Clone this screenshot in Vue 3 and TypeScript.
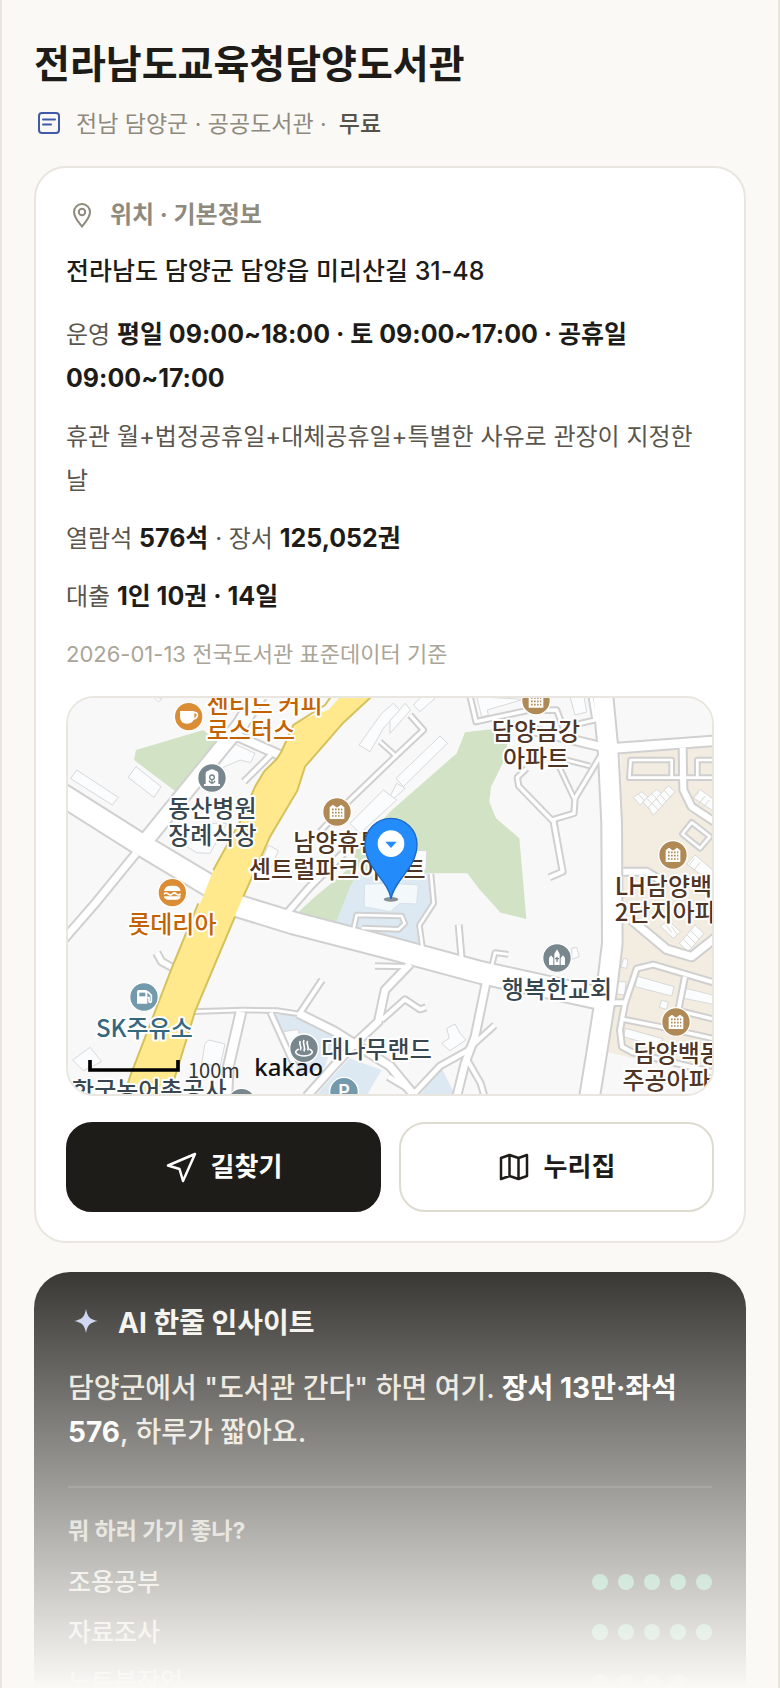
<script setup lang="ts">
interface Road { d: string; w: number }
interface Label { x: number; y: number; tone: string; anchor: 'start' | 'middle'; lines: string[] }
interface Poi { x: number; y: number; tone: string; icon: string }
interface Rating { name: string; score: number }

const roads: Road[] = [
  { d: 'M0 310 L240 462 L470 600 L540 650 L700 699 L990 774 L1265 848 L1640 930', w: 62 },
  { d: 'M255 455 L430 240 L540 105 L600 10', w: 42 },
  { d: 'M525 135 L670 200', w: 24 },
  { d: 'M632 195 L552 275', w: 12 },
  { d: 'M228 490 L110 635 L10 750', w: 20 },
  { d: 'M290 788 L305 815 L350 840', w: 16 },
  { d: 'M400 965 L550 960 L650 962 L720 972', w: 8 },
  { d: 'M715 970 L820 1022 L990 1128 L1070 1225', w: 22 },
  { d: 'M786 870 L718 972', w: 12 },
  { d: 'M543 965 L505 1130 L500 1225', w: 26 },
  { d: 'M632 968 L705 1130', w: 12 },
  { d: 'M685 665 L750 590 L850 490', w: 16 },
  { d: 'M1050 822 L975 900 L955 995 L880 1065 L820 1130 L740 1220', w: 20 },
  { d: 'M945 828 L1050 830', w: 10 },
  { d: 'M1280 870 L1245 1040 L1215 1120 L1190 1220', w: 20 },
  { d: 'M1304 1006 L1222 1080', w: 12 },
  { d: 'M1222 1082 L1140 1128 L1065 1208 L985 1160', w: 14 },
  { d: 'M1222 1110 L1262 1180 L1275 1225', w: 12 },
  { d: 'M1196 704 L1206 820', w: 12 },
  { d: 'M1345 793 L1305 788 L1290 850', w: 8 },
  { d: 'M1098 952 L1080 958 L1035 928 L965 990', w: 12 },
  { d: 'M1113 552 L1121 640 L1078 706 L1090 790', w: 8 },
  { d: 'M880 720 L890 675 L1025 678 L1034 700 L1016 718 L905 714', w: 8 },
  { d: 'M1628 10 L1644 175 L1655 400 L1657 760 L1640 900 L1610 1090 L1588 1225', w: 56 },
  { d: 'M1650 176 L1970 152', w: 26 },
  { d: 'M1655 178 L1500 140 L1380 112', w: 22 },
  { d: 'M1228 10 L1248 95 L1400 62 L1490 60 L1520 140', w: 10 },
  { d: 'M1592 10 L1605 90 L1540 105', w: 10 },
  { d: 'M1400 235 L1372 262 L1376 288 L1475 390 L1542 370 L1545 325 L1620 200', w: 10 },
  { d: 'M1480 390 L1508 545 L1468 562', w: 12 },
  { d: 'M1495 225 L1542 325', w: 8 },
  { d: 'M1500 205 L1590 228', w: 8 },
  { d: 'M1050 75 L1090 120 L1000 205 L870 330 L780 425', w: 10 },
  { d: 'M960 155 L1010 200', w: 8 },
  { d: 'M1868 172 L1870 300 L1895 350 L1970 400', w: 18 },
  { d: 'M1712 210 H1835 V263 H1708 Z', w: 8 },
  { d: 'M1835 263 H1970', w: 8 },
  { d: 'M1912 263 V210 H1970', w: 8 },
  { d: 'M1895 397 L1950 440 L1920 475 L1867 432 Z', w: 8 },
  { d: 'M1690 545 L1760 545 L1800 570', w: 18 },
  { d: 'M1715 690 L1820 778 L1895 800 L1970 740', w: 22 },
  { d: 'M1970 880 L1780 824 L1730 836 L1695 940 L1680 1020 L1686 1070 L1720 1088 L1970 1150', w: 12 },
  { d: 'M1875 860 L1855 960', w: 12 },
  { d: 'M1690 988 L1790 1008 L1970 1048', w: 10 },
  { d: 'M1850 960 L1970 990', w: 10 },
  { d: 'M1655 938 L1695 938', w: 14 },
]

const buildings: string[] = [
  '50,240 175,322 157,345 32,266', '228,230 303,290 282,322 204,262', '520,160 585,190 572,218 540,210 490,232 455,300 438,285',
  '965,70 1000,40 1020,60 970,115 930,185 897,165', '1140,138 1162,160 1030,290 1008,265', '990,320 1010,280 1036,295 990,335',
  '1060,45 1095,10 1125,25 1080,65', '1010,70 1035,40 1052,60 990,130 990,92', '1250,20 1265,80 1285,76 1282,60 1390,28', '1530,20 1545,75 1580,66 1572,20',
  '365,460 440,400 500,400 450,490 410,488', '625,465 655,482 635,530 605,510', '990,480 1100,482 1098,540 990,545',
  '38,1110 90,1072 125,1115 70,1142', '447,1050 495,1062 480,1130 425,1120 435,1060', '280,20 295,36 306,26',
  '1160,1015 1185,1002 1200,1030 1218,1050 1170,1082 1145,1060 1168,1045', '1535,775 1550,772 1558,800 1535,808',
  '670,1025 715,1018 720,1050 690,1080', '870,400 970,300 1010,330 900,430',
  '1730,858 1842,890 1835,918 1726,890', '1878,895 1970,918 1970,945 1872,925', '1697,1015 1808,1046 1800,1072 1690,1040',
  '1805,930 1825,936 1820,958 1798,952', '1690,805 1704,808 1700,835 1684,832', '1672,875 1698,875 1694,915 1668,912',
  '1720,322 1745,305 1765,322 1740,345', '1748,335 1790,298 1808,315 1765,355', '1765,352 1825,287 1845,305 1780,376',
  '1898,322 1920,298 1970,335 1970,370', '1880,522 1905,495 1970,550 1970,590', '1800,708 1825,692 1862,725 1840,745', '1858,760 1905,705 1932,730 1885,785',
]

const labels: Label[] = [
  { x: 440, y: 68, tone: 'food', anchor: 'start', lines: ['센티드 커피', '로스터스'] },
  { x: 457, y: 382, tone: 'slate', anchor: 'middle', lines: ['동산병원', '장례식장'] },
  { x: 832, y: 484, tone: 'home', anchor: 'middle', lines: ['남양휴튼', '센트럴파크아파트'] },
  { x: 1428, y: 150, tone: 'home', anchor: 'middle', lines: ['담양금강', '아파트'] },
  { x: 1664, y: 614, tone: 'home', anchor: 'start', lines: ['LH담양백', '2단지아파트'] },
  { x: 337, y: 728, tone: 'food', anchor: 'middle', lines: ['롯데리아'] },
  { x: 253, y: 1040, tone: 'fuel', anchor: 'middle', lines: ['SK주유소'] },
  { x: 784, y: 1104, tone: 'slate', anchor: 'start', lines: ['대나무랜드'] },
  { x: 1491, y: 924, tone: 'slate', anchor: 'middle', lines: ['행복한교회'] },
  { x: 1853, y: 1116, tone: 'home', anchor: 'middle', lines: ['담양백동', '주공아파트'] },
  { x: 268, y: 1226, tone: 'slate', anchor: 'middle', lines: ['한국농어촌공사'] },
]

const pois: Poi[] = [
  { x: 386, y: 80, tone: 'food', icon: 'cup' },
  { x: 456, y: 264, tone: 'slate', icon: 'memorial' },
  { x: 831, y: 366, tone: 'home', icon: 'flats' },
  { x: 1428, y: 32, tone: 'home', icon: 'flats' },
  { x: 1839, y: 495, tone: 'home', icon: 'flats' },
  { x: 337, y: 608, tone: 'food', icon: 'burger' },
  { x: 252, y: 921, tone: 'fuel', icon: 'fuel' },
  { x: 732, y: 1075, tone: 'slate', icon: 'spa' },
  { x: 1491, y: 804, tone: 'slate', icon: 'church' },
  { x: 1848, y: 996, tone: 'home', icon: 'flats' },
  { x: 852, y: 1205, tone: 'fuel', icon: 'parking' },
  { x: 545, y: 1238, tone: 'slate', icon: 'none' },
]

const ratings: Rating[] = [
  { name: '조용공부', score: 5 },
  { name: '자료조사', score: 5 },
  { name: '노트북작업', score: 4 },
]
</script>

<template>
  <main class="page">
    <header class="head">
      <h1>전라남도교육청담양도서관</h1>
      <p class="meta">
        <svg class="meta-icon" viewBox="0 0 30 30" aria-hidden="true">
          <rect x="5" y="4" width="20" height="20" rx="3" />
          <path d="M9 10.500h12M9 15.500h8" />
        </svg>
        <span>전남 담양군 · 공공도서관 ·</span>
        <strong>무료</strong>
      </p>
    </header>

    <section class="card">
      <h2 class="label">
        <svg class="pin-icon" viewBox="0 0 32 32" aria-hidden="true">
          <path d="M16 27.500C12.500 23 8 18.500 8 13a8 8 0 0 1 16 0c0 5.500-4.500 10-8 14.500Z" />
          <circle cx="16" cy="13" r="3.200" />
        </svg>
        위치 · 기본정보
      </h2>
      <p class="address">전라남도 담양군 담양읍 미리산길 31-48</p>
      <div class="facts">
        <p>운영 <b>평일 09:00~18:00 · 토 09:00~17:00 · 공휴일 09:00~17:00</b></p>
        <p>휴관 월+법정공휴일+대체공휴일+특별한 사유로 관장이 지정한 날</p>
        <p>열람석 <b>576석</b> · 장서 <b>125,052권</b></p>
        <p>대출 <b>1인 10권 · 14일</b></p>
      </div>
      <p class="source">2026-01-13 전국도서관 표준데이터 기준</p>

      <div class="map">
        <svg viewBox="24 24 1932 1188" preserveAspectRatio="xMidYMid slice" role="img" aria-label="도서관 주변 지도">
          <rect x="-400" y="-400" width="2800" height="2000" fill="#f8f8f8" />
          <g fill="#d1e3c4">
            <path d="M430 120 L482 165 L345 303 L222 210 L228 180Z" />
            <path d="M1215 127 L1345 112 L1338 200 L1293 290 L1288 335 L1308 385 L1378 445 L1395 640 L1399 687 L1322 668 L1260 600 L1222 550 L1115 550 L900 545 L880 490 L990 365 L1190 190Z" />
            <path d="M885 520 L760 625 L715 667 L830 697 L880 590Z" />
          </g>
          <g fill="#dce9f2">
            <path d="M872 585 L900 545 L1108 548 L1122 640 L1068 715 L1080 768 L828 697Z" />
            <path d="M645 975 L720 970 L830 1022 L795 1130 L720 1160 L690 1080Z" />
            <path d="M868 1105 L965 1140 L915 1225 L760 1225Z" />
            <path d="M1145 1135 L1188 1220 L1075 1220Z" />
          </g>
          <path d="M914 582 L1000 580 L1075 585 L1070 642 L1020 640 L990 665 L912 650Z" fill="#f3f8fb" stroke="#d8e2ea" stroke-width="3" />
          <path d="M1682 190 L1980 165 L1980 1165 L1638 1085 L1668 900 L1692 760Z" fill="#f3ece0" />
          <g fill="#fbfcfd" stroke="#d9d9d9" stroke-width="3">
            <polygon v-for="points in buildings" :key="points" :points="points" />
          </g>
          <g fill="none" stroke="#d0d0d0" stroke-linejoin="round">
            <path v-for="road in roads" :key="road.d" :d="road.d" :stroke-width="road.w + 12" />
          </g>
          <g fill="none" stroke="#ffffff" stroke-linejoin="round">
            <path v-for="road in roads" :key="road.d" :d="road.d" :stroke-width="road.w" />
          </g>
          <g stroke="#e0d9cf" stroke-width="3">
            <path d="M1777 341l20 21M1789 328l20 21M1801 315l20 21M1813 302l20 21M1735 312l20 22M1760 325l20 20M1775 311l20 20M1918 305l-22 25M1935 318l-20 25M1948 330l-18 22M1903 505l-15 20M1920 518l-20 25M1870 748l25 25M1881 735l25 25M1892 722l25 25M1815 700l20 28M1835 710l18 25" fill="none" />
          </g>
          <path d="M850 10 L805 60 L735 85 L700 105 L664 185 L650 207 L612 245 L585 290 L540 395 L460 540 L425 630 L333 840 L210 1160 L190 1225 L325 1225 L405 965 L470 810 L545 630 L630 440 L712 302 L735 230 L850 98 L945 10Z" fill="#ffe98c" />
          <path d="M820 10 L795 45 L700 105 L664 185 L650 207 L612 245 L585 290 L540 395 L460 540 M333 840 L210 1160 L190 1225 M415 640 L333 840 M325 1225 L405 965 L470 810 L525 680 M550 620 L630 440 L712 302 L735 230 L850 98 L945 10" fill="none" stroke="#d5c25c" stroke-width="6" />

          <g v-for="poi in pois" :key="`${poi.x}-${poi.y}`" :transform="`translate(${poi.x} ${poi.y})`">
            <circle r="43" :class="['poi', poi.tone]" />
            <g v-if="poi.icon === 'cup'" fill="#fff">
              <path d="M-26-17H17V-2C17 16 7 21-5 21S-26 15-26-2Z" />
              <path d="M14-12H20C29-12 29 5 14 7" fill="none" stroke="#fff" stroke-width="5" />
            </g>
            <g v-else-if="poi.icon === 'memorial'">
              <path d="M-24 24V18H-19V-14Q-18-22-11-22Q0-31 11-22Q18-22 19-14V18H24V24Z" fill="#fff" />
              <path d="M0 4V18M-9 8Q-4 16 0 16Q6 16 9 8" class="detail" />
              <circle cy="-2" r="7" class="detail" />
            </g>
            <g v-else-if="poi.icon === 'flats'">
              <path d="M-22 21V-14L-12-22L-2-14H2L12-22L22-14V21Z" fill="#fff" />
              <path d="M-15-8H16M-15 2H16M-15 12H16" stroke="#b08a56" stroke-width="5" stroke-dasharray="5 4" />
            </g>
            <g v-else-if="poi.icon === 'burger'" fill="#fff">
              <path d="M-25-5Q-22-21-4-21H4Q22-21 25-5Z" />
              <path d="M-25 4Q-18-2-12 4T0 4T12 4T25 4" fill="none" stroke="#fff" stroke-width="5" />
              <path d="M-25 11H25Q24 21 14 21H-14Q-24 21-25 11Z" />
            </g>
            <g v-else-if="poi.icon === 'fuel'">
              <path d="M-21 20V-16Q-21-21-16-21H6Q10-21 10-16V20Z" fill="#fff" />
              <path d="M-14-13H4V-2H-14Z" fill="#7399ac" />
              <path d="M10-17L22-5V13Q20 19 15 14V2H10" fill="none" stroke="#fff" stroke-width="5" />
            </g>
            <g v-else-if="poi.icon === 'spa'" fill="none" stroke="#fff" stroke-width="5">
              <path d="M-16 2C-36 12-18 23 0 23S36 12 16 2" />
              <path d="M-11-22C-18-12-4-6-11 6M0-25C-7-14 7-6 0 9M11-22C4-12 18-6 11 6" />
            </g>
            <g v-else-if="poi.icon === 'church'">
              <path d="M-24 21V0L-18-8L-11 0V21ZM11 21V0L18-8L24 0V21ZM-8 21V-12L0-26L8-12V21Z" fill="#fff" />
              <path d="M0-4V12M-6 2H6" class="detail" />
            </g>
            <text v-else-if="poi.icon === 'parking'" class="parking" text-anchor="middle" y="18">P</text>
          </g>

          <text v-for="label in labels" :key="label.lines[0]" :class="['place', label.tone]" :text-anchor="label.anchor">
            <tspan v-for="(line, i) in label.lines" :key="line" :x="label.x" :y="label.y + i * 80">{{ line }}</tspan>
          </text>

          <path d="M90 1110V1140H354V1110" fill="none" stroke="#000" stroke-width="11" />
          <text class="scale" x="384" y="1163">100m</text>
          <text class="brand" x="583" y="1157">kakao</text>

          <ellipse cx="993" cy="628" rx="22" ry="7" fill="#58636b" opacity="0.700" />
          <path d="M993 626C985 570 915 535 915 463A78 78 0 0 1 1071 463C1071 535 1002 570 993 626Z" fill="#248bfb" stroke="#1a68c8" stroke-width="4" />
          <circle cx="993" cy="461" r="40" fill="#fff" />
          <path d="M976 455H1010L993 474Z" fill="#248bfb" />
        </svg>
      </div>

      <div class="actions">
        <button type="button" class="action primary">
          <svg viewBox="0 0 32 32" aria-hidden="true"><path d="M30 3L3 14.500L14.500 18L18 30Z" /></svg>
          길찾기
        </button>
        <button type="button" class="action">
          <svg viewBox="0 0 32 32" aria-hidden="true"><path d="M3 7L11.500 4L20.500 7L29 4V25L20.500 28L11.500 25L3 28ZM11.500 4V25M20.500 7V28" /></svg>
          누리집
        </button>
      </div>
    </section>

    <section class="insight">
      <h2>
        <svg viewBox="0 0 36 36" aria-hidden="true"><path d="M18 4C19.500 12 22 14.500 30 16C22 17.500 19.500 20 18 28C16.500 20 14 17.500 6 16C14 14.500 16.500 12 18 4Z" /></svg>
        AI 한줄 인사이트
      </h2>
      <p class="summary">담양군에서 "도서관 간다" 하면 여기. <b>장서 13만·좌석 576</b>, 하루가 짧아요.</p>
      <h3>뭐 하러 가기 좋나?</h3>
      <ul>
        <li v-for="rating in ratings" :key="rating.name">
          <span>{{ rating.name }}</span>
          <span class="dots" role="img" :aria-label="`5점 중 ${rating.score}점`">
            <i v-for="n in 5" :key="n" :class="{ on: n <= rating.score }"></i>
          </span>
        </li>
      </ul>
    </section>
    <div class="fade"></div>
  </main>
</template>

<style>
body {
  background: #faf9f5;
}
</style>

<style scoped>
.page {
  position: relative;
  box-sizing: border-box;
  height: 100vh;
  overflow: hidden;
  padding: 38px 32px 0;
  border: solid #e8e6df;
  border-width: 0 2px;
  background: #faf9f6;
  color: #1e1c18;
  font-family: Inter, "Noto Sans CJK KR", sans-serif;
}
h1, h2, h3, p, ul {
  margin: 0;
  padding: 0;
}
h1 {
  font-size: 39px;
  line-height: 52px;
  font-weight: 700;
}
.meta {
  display: flex;
  align-items: center;
  gap: 12px;
  margin: 16px 0 24px;
  font-size: 23px;
  line-height: 36px;
  color: #8f8a7e;
}
.meta strong {
  font-weight: 500;
  color: #55524a;
}
.meta-icon {
  width: 30px;
  height: 30px;
  fill: none;
  stroke: #3f5aa8;
  stroke-width: 2;
  stroke-linecap: round;
}
.card {
  padding: 28px 30px 29px;
  border: 2px solid #e9e6df;
  border-radius: 32px;
  background: #fff;
}
.label {
  display: flex;
  align-items: center;
  gap: 12px;
  font-size: 24px;
  line-height: 38px;
  font-weight: 700;
  color: #8f8a7e;
}
.pin-icon {
  width: 32px;
  height: 32px;
  fill: none;
  stroke: currentColor;
  stroke-width: 2;
}
.address {
  margin-top: 15px;
  font-size: 25px;
  line-height: 44px;
  font-weight: 500;
}
.facts {
  display: grid;
  gap: 14px;
  margin: 20px 0 14px;
  font-size: 24px;
  line-height: 44px;
  color: #5a564d;
}
.facts b {
  font-size: 25px;
  line-height: 1;
  font-weight: 700;
  color: #1e1c18;
}
.source {
  font-size: 22px;
  line-height: 42px;
  color: #aaa598;
}
.map {
  box-sizing: border-box;
  height: 400px;
  margin: 21px 0 26px;
  border: 2px solid #e9e6df;
  border-radius: 28px;
  overflow: hidden;
}
.map svg {
  display: block;
  width: 100%;
  height: 100%;
}
.poi {
  stroke: #fff;
  stroke-width: 4;
}
.poi.food { fill: #db8d36; }
.poi.slate { fill: #78868d; }
.poi.home { fill: #b08a56; }
.poi.fuel { fill: #7399ac; }
.detail {
  fill: none;
  stroke: #78868d;
  stroke-width: 4;
}
.place {
  font-family: "Noto Sans CJK KR", sans-serif;
  font-size: 72px;
  font-weight: 500;
  stroke: #fff;
  stroke-width: 12;
  stroke-linejoin: round;
  paint-order: stroke;
}
.place.food { fill: #c46200; }
.place.slate { fill: #37464f; }
.place.home { fill: #503525; }
.place.fuel { fill: #35687f; }
.parking {
  font-size: 54px;
  font-weight: 600;
  fill: #fff;
}
.scale {
  font-family: "Noto Sans CJK KR", sans-serif;
  font-size: 60px;
  fill: #333;
}
.brand {
  font-family: "Noto Sans", sans-serif;
  font-size: 72px;
  font-weight: 500;
  fill: #111;
}
.actions {
  display: grid;
  grid-template-columns: 1fr 1fr;
  gap: 18px;
}
.action {
  display: flex;
  align-items: center;
  justify-content: center;
  gap: 14px;
  height: 90px;
  padding: 0;
  border: 2px solid #dedbd1;
  border-radius: 26px;
  background: #fff;
  color: #1e1c18;
  font: 700 26px/38px Inter, "Noto Sans CJK KR", sans-serif;
}
.action svg {
  width: 32px;
  height: 32px;
  fill: none;
  stroke: currentColor;
  stroke-width: 2.500;
  stroke-linejoin: round;
}
.action.primary {
  border-color: #1e1c18;
  background: #1e1c18;
  color: #fff;
}
.insight {
  margin-top: 29px;
  padding: 32px 34px;
  border-radius: 36px;
  background: #1e1c18;
  color: #f4f2ec;
}
.insight h2 {
  display: flex;
  align-items: center;
  gap: 14px;
  font-size: 28px;
  line-height: 38px;
  font-weight: 700;
}
.insight h2 svg {
  width: 36px;
  height: 36px;
  fill: #c4ceef;
}
.summary {
  margin: 24px 0 32px;
  font-size: 28px;
  line-height: 44px;
  font-weight: 500;
  color: #e7e2d8;
}
.summary b {
  font-weight: 700;
  color: #fff;
}
.insight h3 {
  padding-top: 24px;
  border-top: 2px solid #3b3935;
  margin-bottom: 7px;
  font-size: 23px;
  line-height: 38px;
  font-weight: 700;
  color: #c4c1b4;
}
.insight ul {
  list-style: none;
}
.insight li {
  display: flex;
  align-items: center;
  justify-content: space-between;
  font-size: 25px;
  line-height: 50px;
  font-weight: 500;
  color: #dedbd0;
}
.dots {
  display: flex;
  gap: 10px;
}
.dots i {
  width: 16px;
  height: 16px;
  border-radius: 50%;
  background: #3b3935;
}
.dots i.on {
  background: #53b088;
}
.fade {
  position: absolute;
  inset: auto 0 0;
  height: 476px;
  background: linear-gradient(rgba(250, 249, 246, 0), #faf9f6);
  pointer-events: none;
}
</style>
